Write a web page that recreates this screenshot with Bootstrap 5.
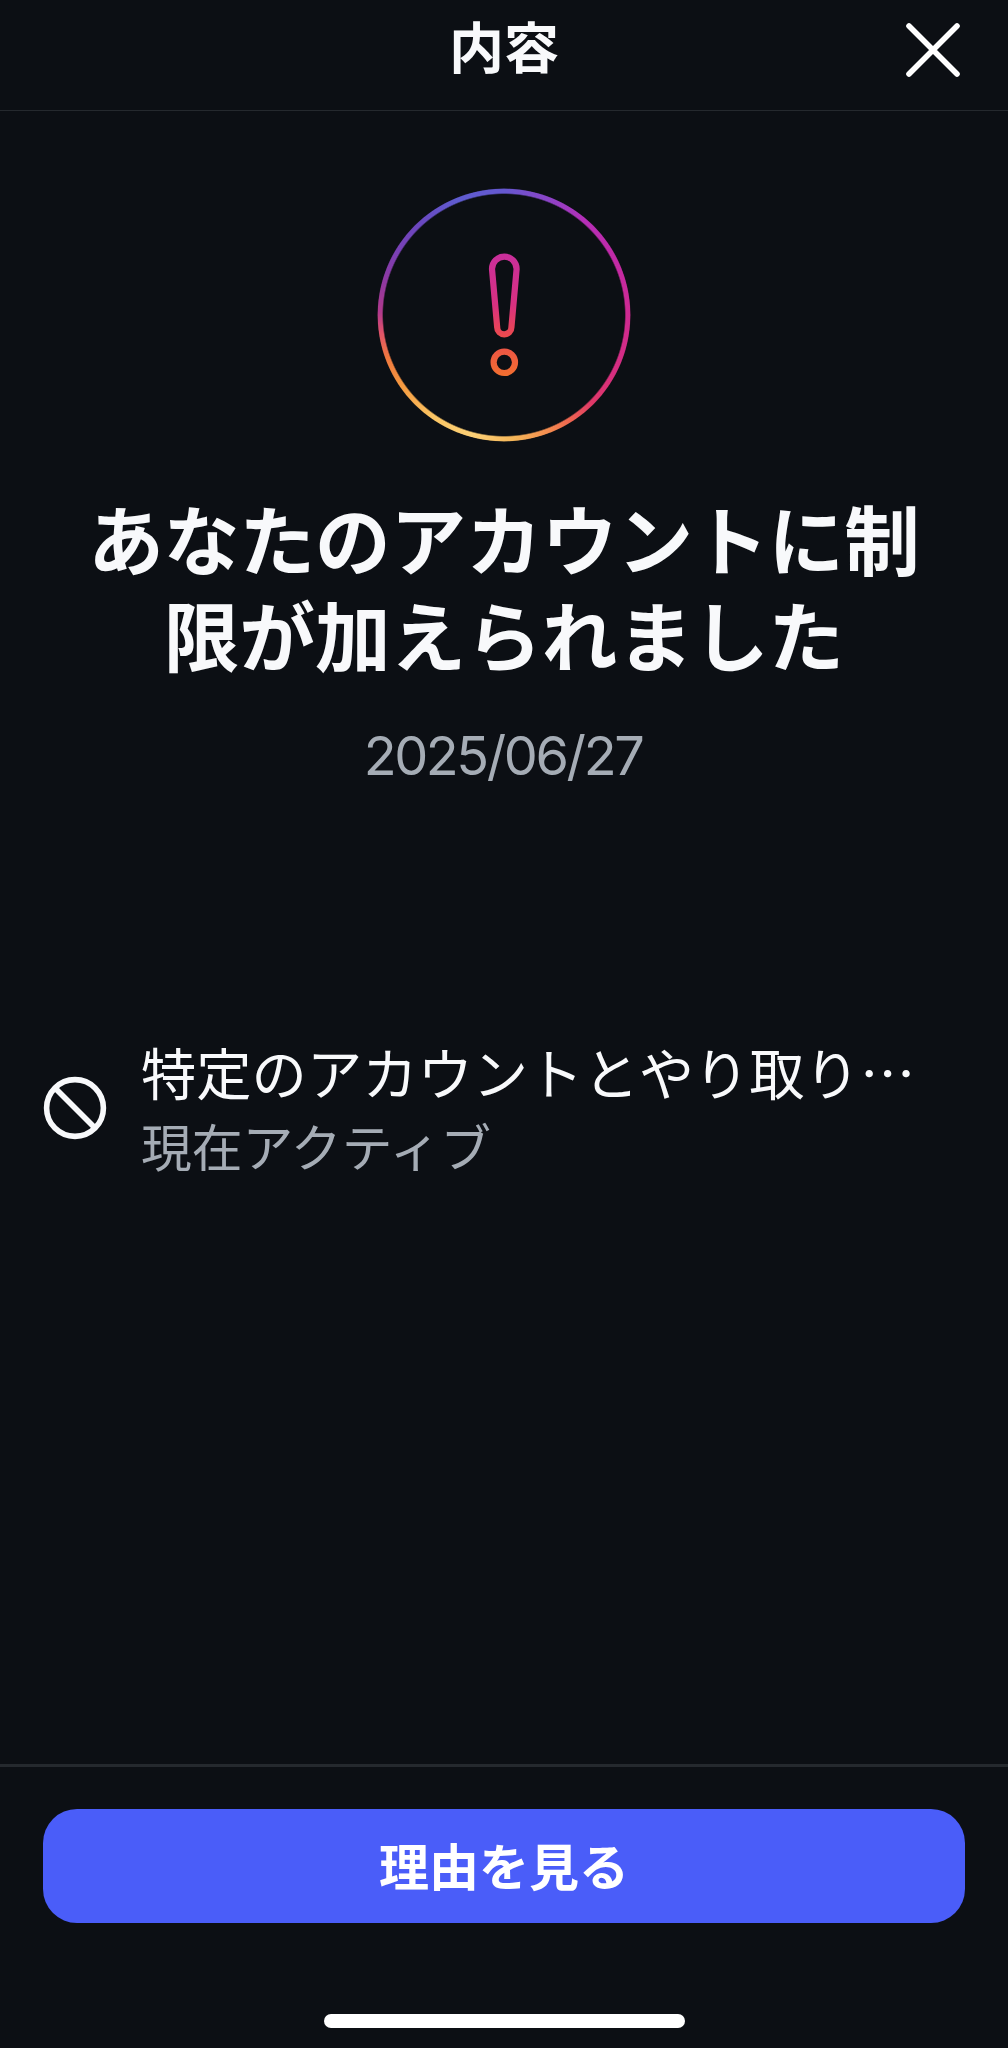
<!DOCTYPE html>
<html lang="ja">
<head>
<meta charset="utf-8">
<meta name="viewport" content="width=device-width, initial-scale=1">
<title>内容</title>
<link href="https://cdn.jsdelivr.net/npm/bootstrap@5.3.0/dist/css/bootstrap.min.css" rel="stylesheet">
<style>
body{background:#0c0f14;color:#f8f9fb;font-family:Inter,"Noto Sans CJK JP",sans-serif;height:2048px;overflow:hidden}
.topbar{height:111px;border-bottom:1px solid #25292e}
.topbar h1{font-size:55px;line-height:80px;font-weight:700;margin:8px 0 0}
.close-btn{right:43px;top:18px;width:64px;height:64px}
.hero-icon{width:256px;height:256px;margin:76px auto 0}
.hero-ring{inset:1px;border-radius:50%;
background:conic-gradient(#6558d0,#8a45c8 20deg,#b52fb8 40deg,#c02aa8 60deg,#cf2a92 90deg,#d62e80 118deg,#e03868 135deg,#ee6550 148deg,#f4894f 158deg,#f5b558 175deg,#fcd077 195deg,#fbc564 215deg,#f59a40 235deg,#f0783f 250deg,#e0526a 262deg,#b23a8c 271deg,#9038a0 285deg,#7a40b4 300deg,#6a48c0 318deg,#5f5cd0 338deg,#6558d0);
-webkit-mask:radial-gradient(closest-side,transparent calc(100% - 6.5px),#000 calc(100% - 5px),#000 calc(100% - 1.2px),transparent);mask:radial-gradient(closest-side,transparent calc(100% - 6.5px),#000 calc(100% - 5px),#000 calc(100% - 1.2px),transparent)}
.headline{font-size:75.6px;line-height:96px;font-weight:700;margin:52px 0 0}
.date{font-size:54px;line-height:64px;letter-spacing:-2.4px;color:#a5acb5;margin:37px 0 0;padding-right:2px}
.limit{margin-top:250px;padding:0 43px;gap:34px}
.limit svg{margin-top:-8px}
.limit-title{font-size:55.3px;line-height:74px}
.ellipsis{font-family:"Noto Sans CJK JP",sans-serif;line-height:1}
.limit-state{font-size:50.8px;line-height:74px;color:#a5acb5}
.bottom{height:284px;border-top:3px solid #25292e;padding:42px 43px 0}
.btn-reason{height:114px;border-radius:34px;background:#4a5df9;font-size:50px;font-weight:700;padding:4px 0 0}
.home-bar{width:361px;height:14px;border-radius:7px;margin:91px auto 0}
</style>
<script src="https://cdn.jsdelivr.net/npm/bootstrap@5.3.0/dist/js/bootstrap.bundle.min.js"></script>
</head>
<body class="d-flex flex-column">
<header class="topbar position-relative text-center"><h1>内容</h1>
<button class="close-btn btn p-0 border-0 position-absolute text-white" aria-label="閉じる"><svg class="d-block" width="64" height="64" viewBox="0 0 64 64" fill="none" stroke="currentColor" stroke-width="5.6" stroke-linecap="round"><path d="M8 8 56 56M56 8 8 56"/></svg></button></header>
<main class="flex-grow-1 text-center">
<div class="hero-icon position-relative">
<div class="hero-ring position-absolute"></div>
<svg class="d-block position-relative" width="256" height="256" viewBox="0 0 256 256" fill="none" stroke="url(#warm)" stroke-width="6.2">
<defs><linearGradient id="warm" gradientUnits="userSpaceOnUse" x1="0" y1="66" x2="0" y2="190"><stop stop-color="#c92f9c"/><stop offset=".42" stop-color="#d93080"/><stop offset=".67" stop-color="#ec4a4e"/><stop offset="1" stop-color="#f2702f"/></linearGradient></defs>
<path d="M116 82a12.3 12.3 0 0 1 24.6 0L135.4 140.5a7.1 6.8 0 0 1-14.2 0Z"/><circle cx="128.3" cy="175.3" r="10.7"/></svg>
</div>
<h2 class="headline">あなたのアカウントに制<br>限が加えられました</h2>
<p class="date">2025/06/27</p>
<div class="limit d-flex align-items-center text-start"><svg width="64" height="64" viewBox="0 0 64 64" fill="none" stroke="currentColor" stroke-width="5.6"><circle cx="32" cy="32" r="28.4"/><path d="M12 12 52 52"/></svg><div><div class="limit-title text-nowrap">特定のアカウントとやり取り<span class="ellipsis">…</span></div><div class="limit-state">現在アクティブ</div></div></div>
</main>
<footer class="bottom"><button class="btn btn-reason d-block w-100 text-white border-0">理由を見る</button><div class="home-bar bg-white"></div></footer>
</body>
</html>
